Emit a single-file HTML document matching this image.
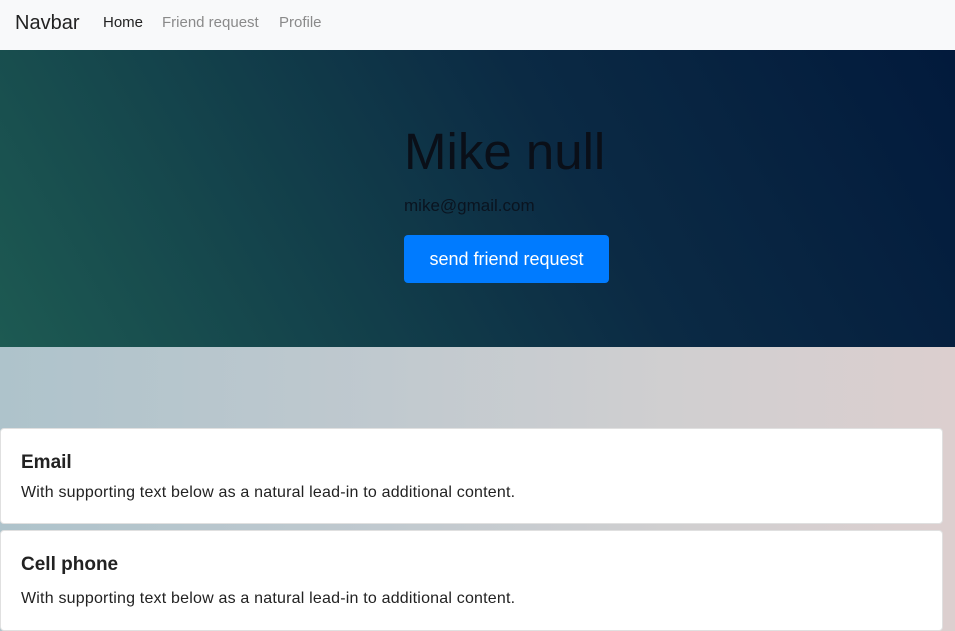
<!DOCTYPE html>
<html><head><style>
body{margin:0;width:955px;height:631px;overflow:hidden;font-family:"Liberation Sans",sans-serif;background:linear-gradient(90deg,#aec3cb 0%,#c0c9cf 40%,#d0cfd0 70%,#dccfcf 100%);position:relative}
.nav{height:50px;background:#f8f9fa;position:relative}
.nav span{position:absolute;top:14px;font-size:15px;color:#8a8a8a}
.hero{position:absolute;top:50px;left:0;width:955px;height:297px;background:linear-gradient(60deg,#1d5a52 0%,#123e4a 35%,#0b2a44 60%,#021a3c 100%)}
.card{position:absolute;left:0;width:943px;background:#fff;border-radius:4px;border:1px solid #e0e0e0;box-sizing:border-box}
.card h5{position:absolute;left:20px;margin:0;font-size:19px;font-weight:bold;color:#222}
.card p{position:absolute;left:20px;margin:0;font-size:16px;letter-spacing:0.2px;color:#222}
</style></head><body>
<div class="nav">
<span style="left:15px;top:12px;font-size:20px;color:#222">Navbar</span>
<span style="left:103px;color:#222">Home</span>
<span style="left:162px">Friend request</span>
<span style="left:279px">Profile</span>
</div>
<div class="hero">
<div style="position:absolute;left:404px;top:72px;font-size:51px;color:#0a0f18;font-weight:300">Mike null</div>
<div style="position:absolute;left:404px;top:146px;font-size:17px;color:#0a1420">mike@gmail.com</div>
<div style="position:absolute;left:404px;top:185px;width:205px;height:48px;background:#007bff;border-radius:4px;color:#fff;font-size:18px;line-height:48px;text-align:center">send friend request</div>
</div>
<div class="card" style="top:428px;height:96px"><h5 style="top:23px">Email</h5><p style="top:55px">With supporting text below as a natural lead-in to additional content.</p></div>
<div class="card" style="top:530px;height:101px"><h5 style="top:23px">Cell phone</h5><p style="top:59px">With supporting text below as a natural lead-in to additional content.</p></div>
</body></html>
